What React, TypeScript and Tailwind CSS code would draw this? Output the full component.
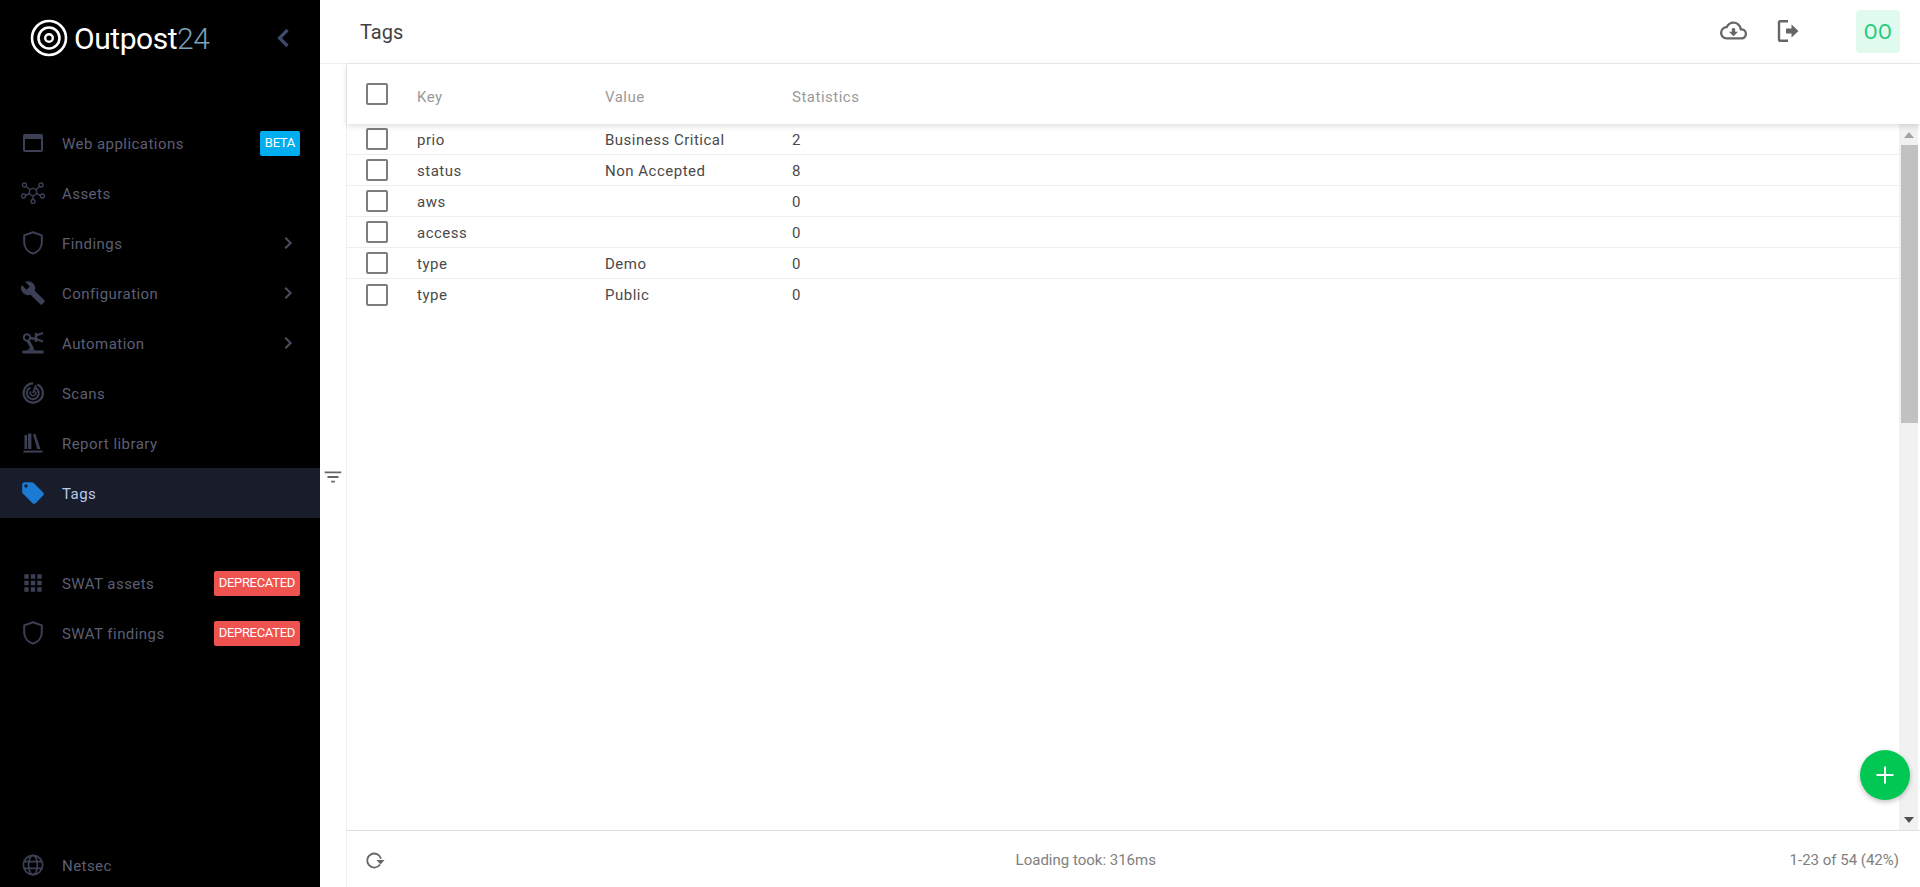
import React from 'react'
import {
  MdApps,
  MdBuild,
  MdChevronRight,
  MdFilterList,
  MdLocalOffer,
  MdOutlineCloudDownload,
} from 'react-icons/md'

const font = { fontFamily: 'Roboto, "Liberation Sans", sans-serif' }

function WindowIcon() {
  return (
    <svg width="20" height="18" viewBox="0 0 20 18" fill="none">
      <rect x="1" y="1" width="18" height="16" rx="1" stroke="currentColor" strokeWidth="2" />
      <rect x="1" y="1" width="18" height="4" fill="currentColor" />
    </svg>
  )
}

function NetworkIcon() {
  return (
    <svg width="24" height="22" viewBox="0 0 24 22" fill="none" stroke="currentColor" strokeWidth="1.4">
      <circle cx="12" cy="10" r="3.6" />
      <circle cx="3.5" cy="3" r="2" />
      <circle cx="20" cy="3" r="2" />
      <circle cx="2.5" cy="14" r="2" />
      <circle cx="21.5" cy="14" r="2" />
      <circle cx="12" cy="19.5" r="2" />
      <path d="M5 4.5l4.3 3.5M18.5 4.5l-3.8 3.5M4.5 13.5l4-2M19.5 13.5l-4-2M12 13.6v3.9" />
    </svg>
  )
}

function ShieldIcon() {
  return (
    <svg width="20" height="24" viewBox="0 0 20 24" fill="none">
      <path
        d="M10 1.2 1.2 4.4v7c0 5.2 3.7 9.6 8.8 11.2 5.1-1.6 8.8-6 8.8-11.2v-7L10 1.2z"
        stroke="currentColor"
        strokeWidth="2"
        strokeLinejoin="round"
      />
    </svg>
  )
}

function RobotArmIcon() {
  return (
    <svg width="24" height="24" viewBox="0 0 24 24" fill="none" stroke="currentColor">
      <rect x="1.5" y="19.5" width="21" height="3" fill="currentColor" strokeWidth="0" />
      <path d="M6 19.5 11 15.5 14 19.5z" fill="currentColor" strokeWidth="0" />
      <circle cx="6" cy="6.5" r="3.2" strokeWidth="2" />
      <path d="M7 9.5 11.5 18" strokeWidth="3.2" />
      <path d="M9 7 15 8" strokeWidth="2.4" />
      <path d="M15 2v9" strokeWidth="2.4" />
      <path d="M15 4.5 22 2 M15 8 22 10.5" strokeWidth="2" />
    </svg>
  )
}

function ScanIcon() {
  return (
    <svg width="22" height="22" viewBox="0 0 22 22" fill="none" stroke="currentColor">
      <path d="M15.5 2.4A9.6 9.6 0 1 1 11 1.4" strokeWidth="2.2" />
      <path d="M13.5 5.8A6 6 0 1 1 8.5 5.6" strokeWidth="2" />
      <path d="M11 11 14 3.5" strokeWidth="2" />
      <path d="M8.8 9.4a2.7 2.7 0 1 0 4.4 0" strokeWidth="1.6" />
    </svg>
  )
}

function LibraryIcon() {
  return (
    <svg width="20" height="20" viewBox="0 0 20 20" fill="currentColor">
      <rect x="1.5" y="2" width="2.6" height="14" />
      <rect x="5" y="0.5" width="3.4" height="15.5" />
      <path d="M10 1h2.4l5 15h-3.2L10 1z" />
      <rect x="0.5" y="17.6" width="19" height="2" />
    </svg>
  )
}

function GlobeIcon() {
  return (
    <svg width="22" height="22" viewBox="0 0 22 22" fill="none" stroke="currentColor" strokeWidth="1.7">
      <circle cx="11" cy="11" r="9.6" />
      <ellipse cx="11" cy="11" rx="4.4" ry="9.6" />
      <path d="M2 7.6h18M2 14.4h18" />
    </svg>
  )
}

function LogoMark() {
  return (
    <svg width="38" height="38" viewBox="0 0 38 38" fill="none" stroke="white">
      <circle cx="19" cy="19" r="17" strokeWidth="2.6" />
      <circle cx="19" cy="19" r="10.5" strokeWidth="2.6" />
      <circle cx="19" cy="19" r="3.8" strokeWidth="2.4" />
    </svg>
  )
}

function LogoutIcon() {
  return (
    <svg width="22" height="22" viewBox="0 0 22 22" fill="none">
      <path d="M11 1.2H3a1 1 0 0 0-1 1v17.6a1 1 0 0 0 1 1h8" stroke="#666" strokeWidth="2.4" />
      <path d="M9 8.6h5.5V4.6L21.5 11l-7 6.4v-4H9z" fill="#666" />
    </svg>
  )
}

function RefreshIcon() {
  return (
    <svg width="20" height="20" viewBox="0 0 20 20" fill="none">
      <path d="M16 8.8A7 7 0 1 0 15 14.5" stroke="#666" strokeWidth="1.8" />
      <path d="M11.5 10h8L15.5 14.5z" fill="#666" />
    </svg>
  )
}

function Badge({ label, color }: { label: string; color: string }) {
  return (
    <span className={`flex h-[25px] items-center rounded-[2px] px-[5px] text-[13px] tracking-[-0.3px] text-white ${color}`}>
      {label}
    </span>
  )
}

function NavItem({
  icon,
  label,
  badge,
  arrow,
  active,
}: {
  icon: React.ReactNode
  label: string
  badge?: React.ReactNode
  arrow?: boolean
  active?: boolean
}) {
  return (
    <div
      className={`flex h-[50px] items-center pr-5 pl-5 text-[15px] tracking-[0.45px] ${
        active ? 'bg-[#181c2b] text-[#b9c9ee]' : 'text-[#5c5f73]'
      }`}
    >
      <span className={`flex w-[26px] justify-center ${active ? 'text-[#1a7ad4]' : 'text-[#3c4055]'}`}>{icon}</span>
      <span className="ml-4 flex-1 pt-[3px]">{label}</span>
      {badge}
      {arrow && <MdChevronRight size={24} className="text-[#4a4e63]" />}
    </div>
  )
}

function Checkbox() {
  return <span className="block h-[22px] w-[22px] rounded-[2px] border-2 border-[#7d7d7d]" />
}

const rows = [
  { key: 'prio', value: 'Business Critical', stats: 2 },
  { key: 'status', value: 'Non Accepted', stats: 8 },
  { key: 'aws', value: '', stats: 0 },
  { key: 'access', value: '', stats: 0 },
  { key: 'type', value: 'Demo', stats: 0 },
  { key: 'type', value: 'Public', stats: 0 },
]

export default function App() {
  return (
    <div className="flex h-[887px] w-[1920px] overflow-hidden bg-white" style={font}>
      <aside className="flex w-[320px] shrink-0 flex-col bg-black">
        <div className="flex h-[118px] items-start pt-[19px] pl-[30px]">
          <LogoMark />
          <span className="mt-[1px] ml-[6px] text-[30px] leading-[38px] tracking-[-0.45px] text-white">
            Outpost<span className="font-light text-[#7aa3bb]">24</span>
          </span>
          <svg className="mt-[9px] ml-[66px]" width="14" height="20" viewBox="0 0 14 20" fill="none">
            <path d="M11.5 2 3.5 10l8 8" stroke="#3d4a6b" strokeWidth="3.2" />
          </svg>
        </div>
        <NavItem icon={<WindowIcon />} label="Web applications" badge={<Badge label="BETA" color="bg-[#00aeef]" />} />
        <NavItem icon={<NetworkIcon />} label="Assets" />
        <NavItem icon={<ShieldIcon />} label="Findings" arrow />
        <NavItem icon={<MdBuild size={26} />} label="Configuration" arrow />
        <NavItem icon={<RobotArmIcon />} label="Automation" arrow />
        <NavItem icon={<ScanIcon />} label="Scans" />
        <NavItem icon={<LibraryIcon />} label="Report library" />
        <NavItem icon={<MdLocalOffer size={26} />} label="Tags" active />
        <div className="h-10" />
        <NavItem icon={<MdApps size={26} />} label="SWAT assets" badge={<Badge label="DEPRECATED" color="bg-[#ef5350]" />} />
        <NavItem icon={<ShieldIcon />} label="SWAT findings" badge={<Badge label="DEPRECATED" color="bg-[#ef5350]" />} />
        <div className="flex-1" />
        <div className="mb-[-3px]">
          <NavItem icon={<GlobeIcon />} label="Netsec" />
        </div>
      </aside>

      <main className="flex min-w-0 flex-1 flex-col">
        <header className="flex h-[64px] shrink-0 items-center border-b border-[#eeeeee] pr-5 pl-10">
          <h1 className="flex-1 text-[20px] text-[#424242]">Tags</h1>
          <MdOutlineCloudDownload size={27} className="mb-[2px] text-[#666]" />
          <span className="mr-[57px] ml-[30px] mb-[2px]">
            <LogoutIcon />
          </span>
          <span className="flex h-[43px] w-[44px] items-center justify-center rounded-[4px] bg-[#e0faee] text-[20px] tracking-[0.5px] text-[#22c97a]">
            OO
          </span>
        </header>

        <div className="flex min-h-0 flex-1">
          <div className="flex w-[27px] shrink-0 items-center justify-center border-r border-[#eeeeee] pt-[2px]">
            <MdFilterList size={22} className="text-[#666]" />
          </div>

          <div className="relative flex min-w-0 flex-1 flex-col">
            <div className="relative z-10 flex h-[60px] shrink-0 items-center bg-white pl-[19px] text-[15px] tracking-[0.5px] text-[#9a9a9a] shadow-[0_2px_6px_rgba(0,0,0,0.14)]">
              <Checkbox />
              <span className="ml-[29px] w-[188px] pt-[6px]">Key</span>
              <span className="w-[187px] pt-[6px]">Value</span>
              <span className="pt-[6px]">Statistics</span>
            </div>

            <div className="flex min-h-0 flex-1">
              <div className="min-w-0 flex-1">
                {rows.map((row, i) => (
                  <div
                    key={i}
                    className="flex h-[31px] items-center border-b border-[#eeeeee] pl-[19px] text-[15px] tracking-[0.5px] text-[#4a4a4a] last:border-b-0"
                  >
                    <Checkbox />
                    <span className="ml-[29px] w-[188px] pt-[2px]">{row.key}</span>
                    <span className="w-[187px] pt-[2px]">{row.value}</span>
                    <span className="pt-[2px]">{row.stats}</span>
                  </div>
                ))}
              </div>
              <div className="mr-[2px] flex w-[19px] shrink-0 flex-col bg-[#f1f1f1]">
                <div className="flex h-[21px] shrink-0 items-center justify-center">
                  <svg width="10" height="6" viewBox="0 0 10 6">
                    <path d="M5 0l5 6H0z" fill="#a3a3a3" />
                  </svg>
                </div>
                <div className="ml-[2px] h-[278px] shrink-0 bg-[#c1c1c1]" />
                <div className="flex-1" />
                <div className="flex h-[21px] shrink-0 items-center justify-center">
                  <svg width="10" height="6" viewBox="0 0 10 6">
                    <path d="M0 0h10L5 6z" fill="#505050" />
                  </svg>
                </div>
              </div>
            </div>

            <div className="relative flex h-[57px] shrink-0 items-center border-t border-[#e0e0e0] pr-[21px] pl-[18px] text-[15px] text-[#808080]">
              <span className="pt-[2px]">
                <RefreshIcon />
              </span>
              <span className="flex-1 pt-[3px] pr-[3px] text-center">Loading took: 316ms</span>
              <span className="pt-[3px]">1-23 of 54 (42%)</span>
            </div>

            <button className="absolute right-[10px] bottom-[87px] z-20 flex h-[50px] w-[50px] items-center justify-center rounded-full bg-[#00c853] shadow-[0_2px_5px_rgba(0,0,0,0.25)]">
              <svg width="20" height="20" viewBox="0 0 20 20">
                <path d="M9 1.5h2v7.5h7.5v2H11v7.5H9V11H1.5V9H9z" fill="white" />
              </svg>
            </button>
          </div>
        </div>
      </main>
    </div>
  )
}
